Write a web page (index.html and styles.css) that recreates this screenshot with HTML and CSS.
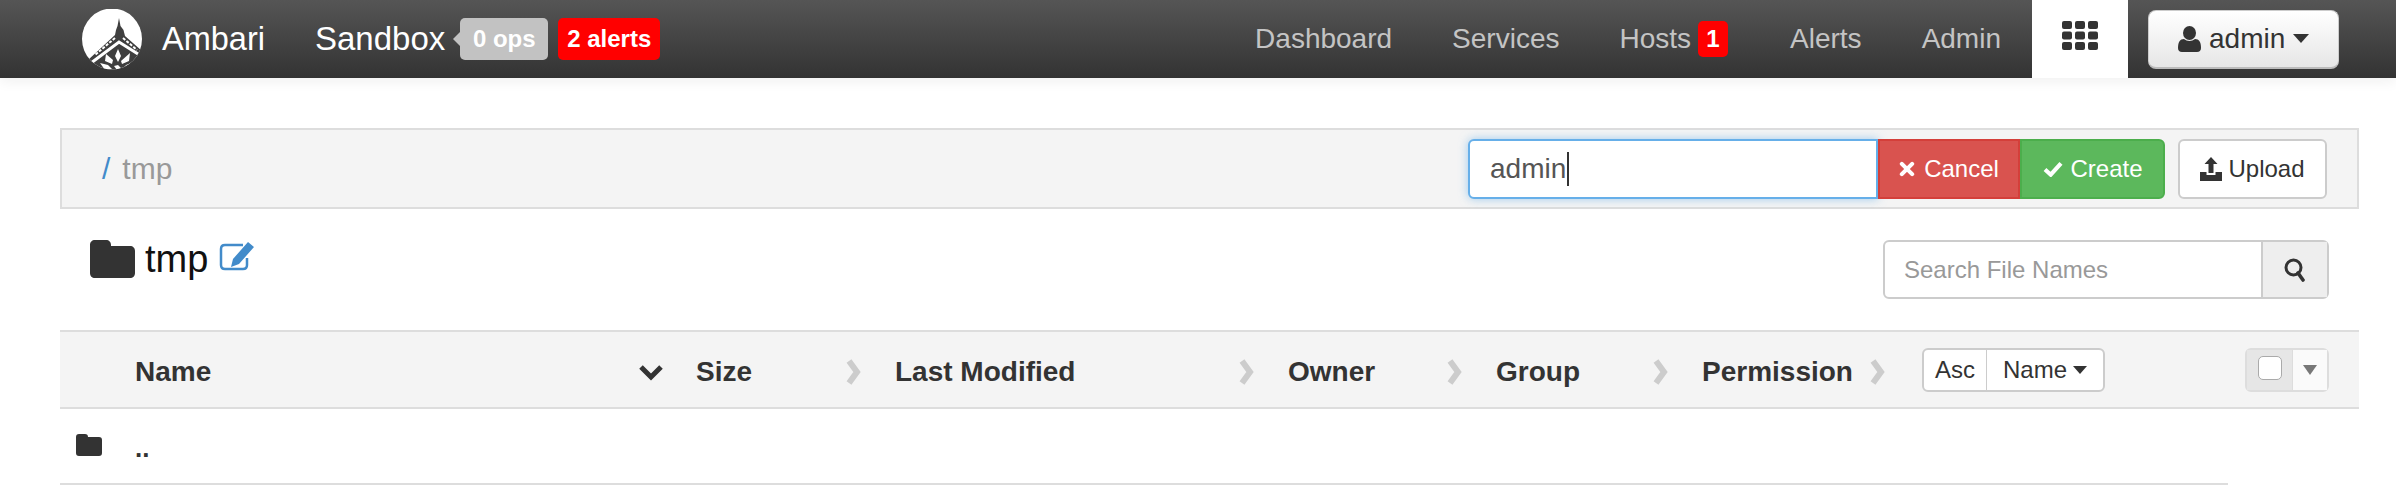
FILE: index.html
```html
<!DOCTYPE html>
<html>
<head>
    <title>Ambari - Files View</title>
    <link rel="stylesheet" href="styles.css">
</head>
<body>
    <nav class="topbar">
        <svg class="logo" viewBox="0 0 60 61">
            <defs><clipPath id="logoClip"><ellipse cx="30" cy="30" rx="30" ry="30.500"/></clipPath></defs>
            <ellipse cx="30" cy="30" rx="30" ry="30.500" fill="#fff"/>
            <g clip-path="url(#logoClip)">
                <path d="M37 9l1.500 8 3 4 1.500 6 17 15v19H0v-8l6-2 27-25 1-5 1.500-4z" fill="#3f3f3f"/>
                <path d="M33 29L13 46M41 29l14 12" fill="none" stroke="#fff" stroke-width="2" stroke-dasharray="3 1.500"/>
                <path d="M9 54l28-21 19 12" fill="none" stroke="#fff" stroke-width="3"/>
                <path d="M36 40l3 7-3 6-3-6zM24 45l7 6-1 4-7-3zM48 44l-1 8-7 3-1-3zM18 54l8 2 4 4-7 1zM44 56l5-2-2 4-6 2zM32 57l4-1 3 3-4 2z" fill="#fff"/>
            </g>
        </svg>
        <span class="brand">Ambari</span>
        <span class="cluster">Sandbox</span>
        <span class="badge badge-ops">0 ops</span>
        <span class="badge badge-alerts">2 alerts</span>

        <div class="nav-links">
            <a>Dashboard</a>
            <a>Services</a>
            <a>Hosts<span class="count">1</span></a>
            <a>Alerts</a>
            <a>Admin</a>
        </div>
        <div class="views-tab">
            <svg class="grid-icon" viewBox="0 0 36 29" fill="#333">
                <rect width="10" height="8" rx="2"/><rect x="13" width="10" height="8" rx="2"/><rect x="26" width="10" height="8" rx="2"/>
                <rect y="10.500" width="10" height="8" rx="2"/><rect x="13" y="10.500" width="10" height="8" rx="2"/><rect x="26" y="10.500" width="10" height="8" rx="2"/>
                <rect y="21" width="10" height="8" rx="2"/><rect x="13" y="21" width="10" height="8" rx="2"/><rect x="26" y="21" width="10" height="8" rx="2"/>
            </svg>
        </div>
        <button class="user-btn">
            <svg class="user-icon" viewBox="0 0 23 26" fill="#333">
                <ellipse cx="11.500" cy="7" rx="6.500" ry="7"/>
                <path d="M0 22c0-6 2-9 6-9 1.500 1 3.500 2 5.500 2s4-1 5.500-2c4 0 6 3 6 9 0 2.500-1.500 4-4 4H4c-2.500 0-4-1.500-4-4z"/>
            </svg>
            admin
            <i class="caret caret-big"></i>
        </button>
    </nav>

    <main class="content">
        <div class="path-bar">
            <div class="crumbs"><span class="slash">/</span><span class="crumb">tmp</span></div>
            <div class="path-actions">
                <div class="new-folder">admin<span class="cursor"></span></div>
                <button class="btn btn-cancel">
                    <svg class="btn-icon" viewBox="0 0 14 14"><path d="M2.500 2.500l9 9M11.500 2.500l-9 9" stroke="#fff" stroke-width="3.600" stroke-linecap="round"/></svg>
                    Cancel
                </button>
                <button class="btn btn-create">
                    <svg class="btn-icon btn-icon-check" viewBox="0 0 18 14"><path d="M2 7.500l5 4.500 9-10" fill="none" stroke="#fff" stroke-width="3.600"/></svg>
                    Create
                </button>
                <button class="btn btn-upload">
                    <svg class="upload-icon" viewBox="0 0 22 24" fill="#333">
                        <path d="M11 0l6.500 7H13.500v9h-5V7H4.500z"/>
                        <path d="M0 15h6.500v3h9v-3H22v9H0z"/>
                    </svg>
                    Upload
                </button>
            </div>
        </div>

        <div class="title-row">
            <h1 class="folder-title">
                <svg class="folder-big" viewBox="0 0 45 38" fill="#333"><path d="M5 0h11c3 0 5 2 5 5v1h19c3 0 5 2 5 5v22c0 3-2 5-5 5H5c-3 0-5-2-5-5V5c0-3 2-5 5-5z"/></svg>
                tmp
                <svg class="edit-icon" viewBox="0 0 36 29">
                    <path d="M24 3H6C3.500 3 2 4.500 2 7v16c0 2.500 1.500 4 4 4h18c2.500 0 4-1.500 4-4v-7" fill="none" stroke="#428bca" stroke-width="2.500"/>
                    <path d="M29 0l6 5-15 17-8 3 2-8zM14 18l4 3-5 2z" fill="#428bca"/>
                </svg>
            </h1>
            <div class="search">
                <div class="search-input">Search File Names</div>
                <div class="search-btn">
                    <svg class="search-icon" viewBox="0 0 22 24"><circle cx="9.500" cy="9.500" r="7.500" fill="none" stroke="#333" stroke-width="3"/><path d="M14 15l5 7" stroke="#333" stroke-width="3.600" stroke-linecap="round"/></svg>
                </div>
            </div>
        </div>

        <div class="list-header">
            <div class="col col-name">Name
                <svg class="chev chev-down" viewBox="0 0 26 18"><path d="M3 4l10 10L23 4" fill="none" stroke="#333" stroke-width="5"/></svg>
            </div>
            <div class="col col-size">Size<svg class="chev" viewBox="0 0 17 26"><path d="M4 2l8 11-8 11" fill="none" stroke="#ccc" stroke-width="6"/></svg></div>
            <div class="col col-modified">Last Modified<svg class="chev" viewBox="0 0 17 26"><path d="M4 2l8 11-8 11" fill="none" stroke="#ccc" stroke-width="6"/></svg></div>
            <div class="col col-owner">Owner<svg class="chev" viewBox="0 0 17 26"><path d="M4 2l8 11-8 11" fill="none" stroke="#ccc" stroke-width="6"/></svg></div>
            <div class="col col-group">Group<svg class="chev" viewBox="0 0 17 26"><path d="M4 2l8 11-8 11" fill="none" stroke="#ccc" stroke-width="6"/></svg></div>
            <div class="col col-perm">Permission<svg class="chev" viewBox="0 0 17 26"><path d="M4 2l8 11-8 11" fill="none" stroke="#ccc" stroke-width="6"/></svg></div>
            <div class="sort-group">
                <span class="sort-dir">Asc</span>
                <span class="sort-key">Name<i class="caret"></i></span>
            </div>
            <div class="check-group">
                <span class="check-cell"><span class="checkbox"></span></span>
                <span class="check-drop"><i class="caret caret-grey"></i></span>
            </div>
        </div>

        <div class="list-row">
            <svg class="folder-small" viewBox="0 0 26 22" fill="#333"><path d="M3 0h6c2 0 3 1 3 3h11c2 0 3 1 3 3v13c0 2-1 3-3 3H3c-2 0-3-1-3-3V3c0-2 1-3 3-3z"/></svg>
            <span class="up-link">..</span>
        </div>
    </main>
</body>
</html>
```

FILE: styles.css
```css
body {
    margin: 0;
    font-family: "Liberation Sans", Arial, sans-serif;
    color: #333;
    background-color: #fff;
}

.topbar {
    display: flex;
    align-items: center;
    height: 78px;
    padding: 0 57px 0 82px;
    background: linear-gradient(to bottom, #555, #333);
    box-shadow: 0 4px 12px rgba(0, 0, 0, 0.06);
}

.logo {
    width: 60px;
    height: 61px;
    margin-right: 20px;
}

.brand {
    font-size: 32.500px;
    color: #fff;
    margin-right: 50px;
}

.cluster {
    font-size: 33px;
    color: #fff;
    margin-right: 15px;
}

.badge {
    display: flex;
    align-items: center;
    justify-content: center;
    height: 42px;
    border-radius: 5px;
    font-size: 24px;
    font-weight: bold;
    color: #fff;
}

.badge-ops {
    position: relative;
    width: 88px;
    background-color: #c2c2c2;
    margin-right: 10px;
}

.badge-ops:before {
    content: "";
    position: absolute;
    left: -7px;
    top: 14px;
    border-style: solid;
    border-width: 7px 7px 7px 0;
    border-color: transparent #c2c2c2 transparent transparent;
}

.badge-alerts {
    width: 102px;
    background-color: #f00;
}

.nav-links {
    display: flex;
    align-items: center;
    gap: 60px;
    margin-left: auto;
    margin-right: 31px;
    font-size: 28px;
    color: #c4c4c4;
}

.nav-links a {
    display: flex;
    align-items: center;
}

.count {
    display: flex;
    align-items: center;
    justify-content: center;
    width: 30px;
    height: 36px;
    margin-left: 7px;
    margin-right: 2px;
    border-radius: 5px;
    background-color: #f00;
    color: #fff;
    font-size: 24px;
    font-weight: bold;
}

.views-tab {
    display: flex;
    justify-content: center;
    width: 96px;
    height: 78px;
    background-color: #fff;
    padding-top: 21px;
    box-sizing: border-box;
}

.grid-icon {
    width: 36px;
    height: 29px;
}

.user-btn {
    display: flex;
    align-items: center;
    width: 191px;
    height: 59px;
    margin-left: 20px;
    padding: 0 0 0 29px;
    border: 1px solid #ccc;
    border-bottom: 2px solid #bbb;
    border-radius: 8px;
    background: linear-gradient(to bottom, #fff, #e6e6e6);
    font-family: inherit;
    font-size: 28px;
    color: #333;
    box-sizing: border-box;
}

.user-icon {
    width: 23px;
    height: 26px;
    margin-right: 8px;
}

.caret {
    display: inline-block;
    width: 0;
    height: 0;
    margin-left: 6px;
    border-style: solid;
    border-width: 8px 7px 0 7px;
    border-color: #333 transparent transparent transparent;
}

.caret-big {
    margin-left: 8px;
    border-width: 9px 8px 0 8px;
}

.caret-grey {
    margin-left: 0;
    border-width: 10px 7px 0 7px;
    border-color: #777 transparent transparent transparent;
}

.content {
    padding: 50px 37px 0 60px;
}

.path-bar {
    display: flex;
    align-items: center;
    justify-content: space-between;
    height: 81px;
    padding: 0 30px 0 40px;
    border: 2px solid #ddd;
    background-color: #f4f4f4;
    box-sizing: border-box;
}

.crumbs {
    display: flex;
    align-items: center;
    font-size: 30px;
}

.slash {
    color: #428bca;
    margin-right: 12px;
}

.crumb {
    color: #999;
}

.path-actions {
    display: flex;
    align-items: center;
    height: 60px;
}

.new-folder {
    display: flex;
    align-items: center;
    width: 410px;
    height: 60px;
    padding-left: 20px;
    border: 2px solid #66afe9;
    border-radius: 6px 0 0 6px;
    background-color: #fff;
    box-shadow: 0 0 10px rgba(102, 175, 233, 0.6);
    font-size: 28px;
    color: #555;
    box-sizing: border-box;
}

.cursor {
    width: 2px;
    height: 34px;
    margin-left: 1px;
    background-color: #333;
}

.btn {
    display: flex;
    align-items: center;
    justify-content: center;
    height: 60px;
    padding: 0;
    font-family: inherit;
    font-size: 24px;
    box-sizing: border-box;
}

.btn-icon {
    width: 16px;
    height: 16px;
    margin-right: 9px;
}

.btn-icon-check {
    width: 22px;
    margin-right: 6px;
}

.btn-cancel {
    width: 142px;
    border: 2px solid #d43f3a;
    background-color: #d9534f;
    color: #fff;
}

.btn-create {
    width: 145px;
    border: 2px solid #4cae4c;
    border-radius: 0 6px 6px 0;
    background-color: #5cb85c;
    color: #fff;
}

.btn-upload {
    width: 149px;
    margin-left: 13px;
    border: 2px solid #ccc;
    border-radius: 6px;
    background-color: #fff;
    color: #333;
}

.upload-icon {
    width: 22px;
    height: 24px;
    margin-right: 6px;
}

.title-row {
    display: flex;
    justify-content: space-between;
    align-items: flex-start;
    height: 121px;
    padding: 31px 30px 0 30px;
    box-sizing: border-box;
}

.folder-title {
    display: flex;
    align-items: center;
    height: 38px;
    margin: 0;
    font-size: 38px;
    font-weight: normal;
    color: #111;
}

.folder-big {
    width: 45px;
    height: 38px;
    margin-right: 10px;
}

.edit-icon {
    width: 36px;
    height: 29px;
    margin-left: 11px;
    margin-top: -6px;
}

.search {
    display: flex;
    height: 59px;
    border: 2px solid #ccc;
    border-radius: 6px;
    box-sizing: border-box;
}

.search-input {
    display: flex;
    align-items: center;
    width: 378px;
    padding-left: 19px;
    font-size: 24px;
    color: #999;
    box-sizing: border-box;
    border-right: 2px solid #ccc;
}

.search-btn {
    display: flex;
    align-items: center;
    justify-content: center;
    width: 64px;
    background-color: #eee;
}

.search-icon {
    width: 22px;
    height: 24px;
}

.list-header {
    display: flex;
    align-items: center;
    height: 79px;
    padding-left: 75px;
    border-top: 2px solid #ddd;
    border-bottom: 2px solid #ddd;
    background-color: #f4f4f4;
    box-sizing: border-box;
}

.col {
    display: flex;
    align-items: center;
    height: 100%;
    padding-top: 4px;
    font-size: 28px;
    font-weight: bold;
    box-sizing: border-box;
}

.chev {
    width: 17px;
    height: 26px;
    margin-left: auto;
    margin-right: 33px;
}

.chev-down {
    width: 26px;
    height: 18px;
    margin-right: 32px;
}

.col-name { width: 561px; }
.col-size { width: 199px; }
.col-modified { width: 393px; }
.col-owner { width: 208px; }
.col-group { width: 206px; }
.col-perm { width: 220px; }

.col-perm .chev {
    margin-right: 36px;
}

.sort-group {
    display: flex;
    height: 44px;
    width: 183px;
    border: 2px solid #ccc;
    border-radius: 6px;
    background-color: #fff;
    font-size: 24px;
    box-sizing: border-box;
}

.sort-dir {
    display: flex;
    align-items: center;
    justify-content: center;
    width: 62px;
    border-right: 1px solid #ccc;
}

.sort-key {
    display: flex;
    align-items: center;
    justify-content: center;
    flex: 1;
}

.check-group {
    display: flex;
    height: 44px;
    width: 84px;
    margin-left: 140px;
    border: 2px solid #ddd;
    border-radius: 6px;
    box-sizing: border-box;
}

.check-cell {
    display: flex;
    align-items: center;
    justify-content: center;
    width: 45px;
    background-color: #e6e6e6;
    border-right: 1px solid #ddd;
}

.checkbox {
    width: 24px;
    height: 24px;
    border: 1px solid #aaa;
    border-radius: 5px;
    background-color: #fff;
    box-sizing: border-box;
    margin-top: -4px;
}

.check-drop {
    display: flex;
    align-items: center;
    justify-content: center;
    flex: 1;
    background-color: #fafafa;
}

.list-row {
    display: flex;
    width: 2168px;
    height: 76px;
    padding: 25px 0 0 16px;
    border-bottom: 2px solid #ddd;
    box-sizing: border-box;
}

.folder-small {
    width: 26px;
    height: 22px;
    margin-right: 33px;
}

.up-link {
    font-size: 26px;
    font-weight: bold;
    line-height: 28px;
}
```
